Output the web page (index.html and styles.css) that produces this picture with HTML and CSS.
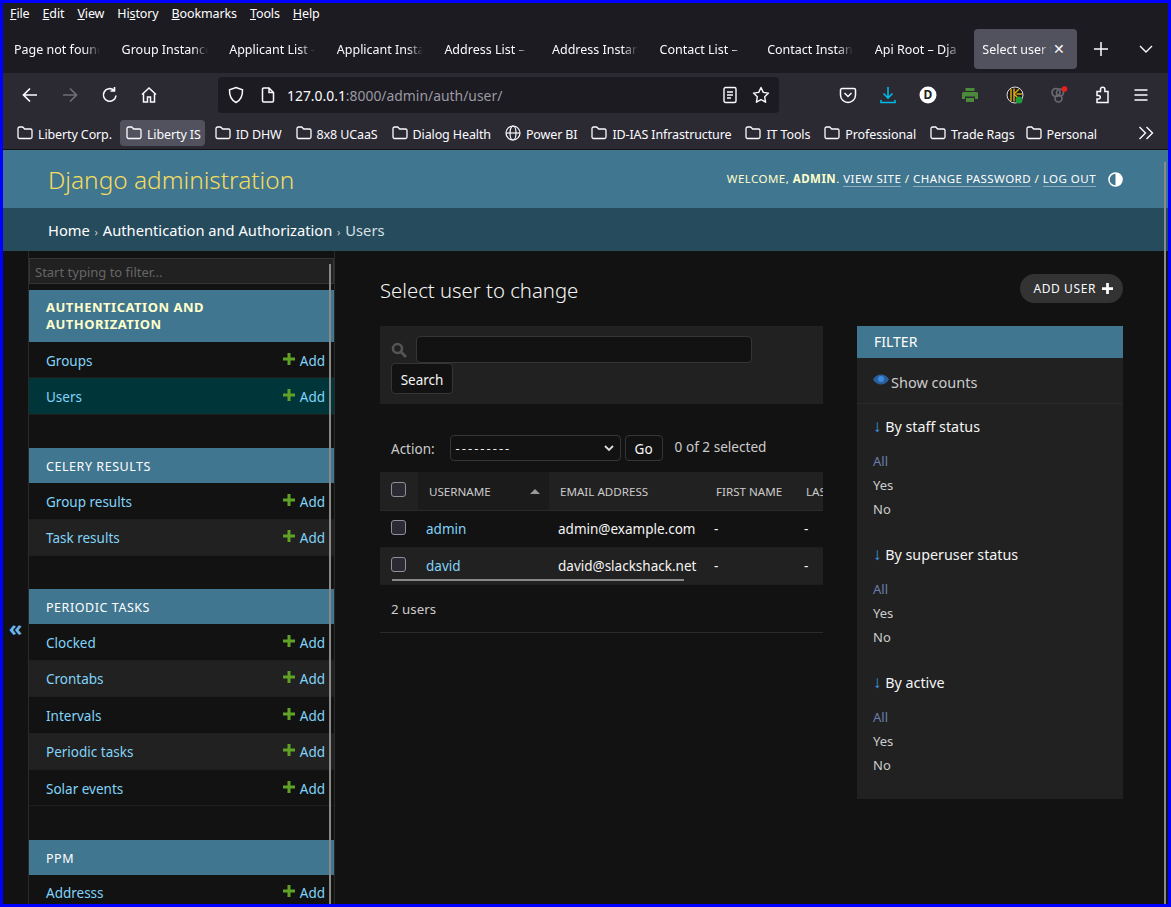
FILE: index.html
```html
<!DOCTYPE html>
<html>
    <head>
        <title>Select user to change | Django site admin</title>
        <link rel="stylesheet" href="styles.css">
    </head>
    <body>
        <svg class="defs" width="0" height="0">
            <symbol id="folder" viewBox="0 0 16 16"><path d="M1 3.500C1 2.700 1.700 2 2.500 2h3.200l2 2h5.800c.8 0 1.500.7 1.500 1.500v6.500c0 .8-.7 1.500-1.500 1.500h-11C1.700 13.500 1 12.800 1 12z" fill="none" stroke="currentColor" stroke-width="1.300"/></symbol>
            <symbol id="plus" viewBox="0 0 12 12"><path d="M4.500 0h3v4.500H12v3H7.500V12h-3V7.500H0v-3h4.500z" fill="currentColor"/></symbol>
        </svg>
        <div class="window">
            <div class="menubar">
                <span><u>F</u>ile</span>
                <span><u>E</u>dit</span>
                <span><u>V</u>iew</span>
                <span>Hi<u>s</u>tory</span>
                <span><u>B</u>ookmarks</span>
                <span><u>T</u>ools</span>
                <span><u>H</u>elp</span>
            </div>
            <div class="tabbar">
                <div class="tab"><span>Page not found</span></div>
                <div class="tab"><span>Group Instance</span></div>
                <div class="tab"><span>Applicant List –</span></div>
                <div class="tab"><span>Applicant Insta</span></div>
                <div class="tab"><span>Address List –</span></div>
                <div class="tab"><span>Address Instan</span></div>
                <div class="tab"><span>Contact List –</span></div>
                <div class="tab"><span>Contact Instan</span></div>
                <div class="tab"><span>Api Root – Dja</span></div>
                <div class="tab tab-active"><span>Select user t</span><b>✕</b></div>
                <svg class="new-tab" width="16" height="16" viewBox="0 0 16 16"><path d="M8 1v14M1 8h14" stroke="#fbfbfe" stroke-width="1.500"/></svg>
                <svg class="tab-list" width="16" height="16" viewBox="0 0 16 16"><path d="M2 5l6 6 6-6" fill="none" stroke="#fbfbfe" stroke-width="1.400"/></svg>
            </div>
            <div class="navbar">
                <svg class="nav-back" width="18" height="18" viewBox="0 0 18 18"><path d="M16 9H2.500M9 2.500L2.500 9 9 15.500" fill="none" stroke="#fbfbfe" stroke-width="1.700"/></svg>
                <svg class="nav-forward" width="18" height="18" viewBox="0 0 18 18"><path d="M2 9h13.500M9 2.500L15.500 9 9 15.500" fill="none" stroke="#6f6e75" stroke-width="1.700"/></svg>
                <svg class="nav-reload" width="18" height="18" viewBox="0 0 18 18"><path d="M15 9.500A6.300 6.300 0 1 1 13 4.300M13.500 1v4h-4" fill="none" stroke="#fbfbfe" stroke-width="1.600"/></svg>
                <svg class="nav-home" width="18" height="18" viewBox="0 0 18 18"><path d="M2 8.500L9 2l7 6.500M3.500 7.500V16h4v-5h3v5h4V7.500" fill="none" stroke="#fbfbfe" stroke-width="1.500"/></svg>
                <div class="urlbar">
                    <svg width="18" height="18" viewBox="0 0 18 18"><path d="M9 1.500l6.500 2.200c.2 5.500-1.500 10.300-6.500 12.800C4 14 2.300 9.200 2.500 3.700z" fill="none" stroke="#fbfbfe" stroke-width="1.500"/></svg>
                    <svg class="url-page" width="14" height="16" viewBox="0 0 14 16"><path d="M1.500 2.200c0-.6.500-1.200 1.200-1.200h5.300l4.500 4.500v8.300c0 .6-.5 1.200-1.200 1.200H2.700c-.7 0-1.200-.6-1.200-1.200zM8 1v4.500h4.500" fill="none" stroke="#fbfbfe" stroke-width="1.500"/></svg>
                    <span class="url-text">127.0.0.1<em>:8000/admin/auth/user/</em></span>
                    <svg class="url-reader" width="16" height="18" viewBox="0 0 16 18"><path d="M3.500 1.500h9c.8 0 1.500.7 1.500 1.500v12c0 .8-.7 1.500-1.500 1.500h-9C2.700 16.500 2 15.800 2 15V3c0-.8.7-1.500 1.500-1.500zM5 6h6M5 9h6M5 12h4" fill="none" stroke="#fbfbfe" stroke-width="1.400"/></svg>
                    <svg width="18" height="18" viewBox="0 0 18 18"><path d="M9 1.500l2.300 4.900 5.200.7-3.800 3.700.9 5.400L9 13.600l-4.600 2.600.9-5.400L1.500 7.100l5.200-.7z" fill="none" stroke="#fbfbfe" stroke-width="1.400" stroke-linejoin="round"/></svg>
                </div>
                <div class="nav-tools">
                    <svg width="18" height="18" viewBox="0 0 18 18"><path d="M3 2.500h12c.8 0 1.500.7 1.500 1.500v5a7.500 7.500 0 0 1-15 0V4c0-.8.7-1.500 1.500-1.500zM5.500 7L9 10.500 12.500 7" fill="none" stroke="#fbfbfe" stroke-width="1.500"/></svg>
                    <svg width="18" height="18" viewBox="0 0 18 18"><path d="M9 1v10.500M4.500 7.500L9 12l4.500-4.500M2 14v2.500h14V14" fill="none" stroke="#00b8e6" stroke-width="1.600"/></svg>
                    <svg width="18" height="18" viewBox="0 0 18 18"><circle cx="9" cy="9" r="8.500" fill="#fff"/><text x="9" y="13" text-anchor="middle" class="ext-d">D</text></svg>
                    <svg width="18" height="18" viewBox="0 0 18 18"><path d="M4.500 2h9v3h-9zM2.500 6h13C16.500 6 17 6.800 17 7.500V13h-3v-2.500H4V13H1V7.500C1 6.800 1.500 6 2.500 6zM5 12h8v4H5z" fill="#4a8a3a"/></svg>
                    <svg width="18" height="18" viewBox="0 0 18 18"><circle cx="9" cy="9" r="8" fill="#1a1a1a" stroke="#ddd" stroke-width="1"/><path d="M5 3v12M8 2.500v13M8 8l5-5M8 8l5 5M10.500 8H16" fill="none" stroke="#d9a514" stroke-width="1.500"/><circle cx="13" cy="14" r="3.500" fill="#1f9a3c"/></svg>
                    <svg width="18" height="18" viewBox="0 0 18 18"><g fill="none" stroke="#6a696f" stroke-width="1.700"><circle cx="6" cy="6.500" r="4"/><circle cx="10" cy="6.500" r="3.500"/><circle cx="8.500" cy="12.500" r="3.500"/></g><circle cx="14.500" cy="3" r="2.800" fill="#f01c1c"/></svg>
                    <svg width="18" height="18" viewBox="0 0 18 18"><path d="M4 5.500h3.500V3.500a2.200 2.200 0 0 1 4.400 0v2H15v11H4V13h1.500a1.800 1.800 0 0 0 0-3.600H4z" fill="none" stroke="#fbfbfe" stroke-width="1.500"/></svg>
                    <svg width="18" height="18" viewBox="0 0 18 18"><path d="M2.500 4h13M2.500 9h13M2.500 14h13" stroke="#fbfbfe" stroke-width="1.500"/></svg>
                </div>
            </div>
            <div class="bookmarks">
                <div class="bookmark"><svg width="16" height="16"><use href="#folder"/></svg>Liberty Corp.</div>
                <div class="bookmark bookmark-open"><svg width="16" height="16"><use href="#folder"/></svg>Liberty IS</div>
                <div class="bookmark"><svg width="16" height="16"><use href="#folder"/></svg>ID DHW</div>
                <div class="bookmark"><svg width="16" height="16"><use href="#folder"/></svg>8x8 UCaaS</div>
                <div class="bookmark"><svg width="16" height="16"><use href="#folder"/></svg>Dialog Health</div>
                <div class="bookmark"><svg width="16" height="16" viewBox="0 0 16 16"><g fill="none" stroke="currentColor" stroke-width="1.200"><circle cx="8" cy="8" r="7"/><ellipse cx="8" cy="8" rx="3" ry="7"/><path d="M1 8h14"/></g></svg>Power BI</div>
                <div class="bookmark"><svg width="16" height="16"><use href="#folder"/></svg>ID-IAS Infrastructure</div>
                <div class="bookmark"><svg width="16" height="16"><use href="#folder"/></svg>IT Tools</div>
                <div class="bookmark"><svg width="16" height="16"><use href="#folder"/></svg>Professional</div>
                <div class="bookmark"><svg width="16" height="16"><use href="#folder"/></svg>Trade Rags</div>
                <div class="bookmark bookmark-last"><svg width="16" height="16"><use href="#folder"/></svg>Personal</div>
                <svg class="bookmark-more" width="16" height="16" viewBox="0 0 16 16"><path d="M1.500 2l6 6-6 6M8.500 2l6 6-6 6" fill="none" stroke="#fbfbfe" stroke-width="1.400"/></svg>
            </div>

            <div class="page">
                <div class="site-header">
                    <div class="branding">Django administration</div>
                    <div class="user-tools">
                        <span>WELCOME, <strong>ADMIN</strong>. <a>VIEW SITE</a> / <a>CHANGE PASSWORD</a> / <a>LOG OUT</a></span>
                        <svg class="theme-toggle" width="15" height="15" viewBox="0 0 16 16"><circle cx="8" cy="8" r="7" fill="none" stroke="#fff" stroke-width="1.600"/><path d="M8 1a7 7 0 0 1 0 14z" fill="#fff"/></svg>
                    </div>
                </div>
                <div class="breadcrumbs">Home <small>›</small> Authentication and Authorization <small>›</small> <span class="crumb-last">Users</span></div>

                <div class="main">
                    <div class="sidebar-toggle">«</div>
                    <div class="sidebar">
                        <input class="nav-filter" placeholder="Start typing to filter...">
                        <div class="app app-current">
                            <div class="app-caption">AUTHENTICATION AND AUTHORIZATION</div>
                            <div class="model"><a>Groups</a><span class="add"><svg width="12" height="12"><use href="#plus"/></svg><a>Add</a></span></div>
                            <div class="model model-current"><a>Users</a><span class="add"><svg width="12" height="12"><use href="#plus"/></svg><a>Add</a></span></div>
                        </div>
                        <div class="app">
                            <div class="app-caption">CELERY RESULTS</div>
                            <div class="model"><a>Group results</a><span class="add"><svg width="12" height="12"><use href="#plus"/></svg><a>Add</a></span></div>
                            <div class="model model-alt"><a>Task results</a><span class="add"><svg width="12" height="12"><use href="#plus"/></svg><a>Add</a></span></div>
                        </div>
                        <div class="app">
                            <div class="app-caption">PERIODIC TASKS</div>
                            <div class="model"><a>Clocked</a><span class="add"><svg width="12" height="12"><use href="#plus"/></svg><a>Add</a></span></div>
                            <div class="model model-alt"><a>Crontabs</a><span class="add"><svg width="12" height="12"><use href="#plus"/></svg><a>Add</a></span></div>
                            <div class="model"><a>Intervals</a><span class="add"><svg width="12" height="12"><use href="#plus"/></svg><a>Add</a></span></div>
                            <div class="model model-alt"><a>Periodic tasks</a><span class="add"><svg width="12" height="12"><use href="#plus"/></svg><a>Add</a></span></div>
                            <div class="model"><a>Solar events</a><span class="add"><svg width="12" height="12"><use href="#plus"/></svg><a>Add</a></span></div>
                        </div>
                        <div class="app">
                            <div class="app-caption">PPM</div>
                            <div class="model"><a>Addresss</a><span class="add"><svg width="12" height="12"><use href="#plus"/></svg><a>Add</a></span></div>
                        </div>
                        <div class="sidebar-scroll"></div>
                    </div>

                    <div class="content">
                        <div class="content-head">
                            <h1>Select user to change</h1>
                            <a class="addlink">ADD USER <svg width="11" height="11"><use href="#plus"/></svg></a>
                        </div>
                        <div class="columns">
                            <div class="changelist">
                                <div class="toolbar">
                                    <div class="search-row">
                                        <svg width="16" height="16" viewBox="0 0 16 16"><circle cx="6.500" cy="6.500" r="4.500" fill="none" stroke="#555" stroke-width="2.600"/><path d="M10 10l5 5" stroke="#555" stroke-width="2.800"/></svg>
                                        <input class="search-input">
                                    </div>
                                    <button class="btn btn-search">Search</button>
                                </div>
                                <div class="actions">
                                    <label>Action:</label>
                                    <div class="select"><span>---------</span><svg width="10" height="7" viewBox="0 0 10 7"><path d="M1 1l4 4 4-4" fill="none" stroke="#ddd" stroke-width="1.800"/></svg></div>
                                    <button class="btn btn-go">Go</button>
                                    <span class="counter">0 of 2 selected</span>
                                </div>
                                <div class="results">
                                    <table>
                                        <thead>
                                            <tr>
                                                <th class="col-check"><span class="check"></span></th>
                                                <th class="col-user">USERNAME<i class="sort-up"></i></th>
                                                <th class="col-email">EMAIL ADDRESS</th>
                                                <th class="col-first">FIRST NAME</th>
                                                <th class="col-last">LAST NAME</th>
                                            </tr>
                                        </thead>
                                        <tbody>
                                            <tr>
                                                <td><span class="check"></span></td>
                                                <td class="user-cell"><a>admin</a></td>
                                                <td>admin@example.com</td>
                                                <td>-</td>
                                                <td>-</td>
                                            </tr>
                                            <tr class="row-alt">
                                                <td><span class="check"></span></td>
                                                <td class="user-cell"><a>david</a></td>
                                                <td>david@slackshack.net</td>
                                                <td>-</td>
                                                <td>-</td>
                                            </tr>
                                        </tbody>
                                    </table>
                                    <div class="table-scroll"></div>
                                </div>
                                <p class="paginator">2 users</p>
                            </div>
                            <div class="filter">
                                <div class="filter-head">FILTER</div>
                                <div class="show-counts">
                                    <svg width="16" height="11" viewBox="0 0 16 11"><path d="M0 5.500C2 2 5 .5 8 .5s6 1.500 8 5c-2 3.500-5 5-8 5s-6-1.500-8-5z" fill="#2a5f9e"/><circle cx="8" cy="5" r="3" fill="#3f8ad8"/></svg>
                                    Show counts
                                </div>
                                <div class="filter-group">
                                    <h3><span>↓</span> By staff status</h3>
                                    <ul><li class="selected">All</li><li>Yes</li><li>No</li></ul>
                                </div>
                                <div class="filter-group">
                                    <h3><span>↓</span> By superuser status</h3>
                                    <ul><li class="selected">All</li><li>Yes</li><li>No</li></ul>
                                </div>
                                <div class="filter-group">
                                    <h3><span>↓</span> By active</h3>
                                    <ul><li class="selected">All</li><li>Yes</li><li>No</li></ul>
                                </div>
                            </div>
                        </div>
                    </div>
                </div>
                <div class="page-scroll"></div>
            </div>
        </div>
    </body>
</html>
```

FILE: styles.css
```css
* {
	box-sizing: border-box;
}

html, body {
	margin: 0;
	height: 100%;
	overflow: hidden;
}

body {
	font-family: "Noto Sans", "Open Sans", sans-serif;
	color: #fbfbfe;
	background-color: #0000ff;
}

.defs {
	position: absolute;
}

a {
	color: inherit;
}

.window {
	display: flex;
	flex-direction: column;
	height: 907px;
	border: 3px solid #0000ff;
	background-color: #1c1b22;
}

/* browser chrome */
.menubar {
	display: flex;
	gap: 13px;
	height: 24px;
	padding: 2px 0 0 7px;
	font-size: 12.500px;
	letter-spacing: -0.12px;
	line-height: 18px;
	color: #fff;
}

.tabbar {
	display: flex;
	align-items: center;
	height: 46px;
	padding-bottom: 2px;
	font-size: 12.500px;
}

.tab {
	width: 107.600px;
	flex: none;
	padding-left: 11px;
}

.tab span {
	display: block;
	width: 86px;
	overflow: hidden;
	white-space: nowrap;
	-webkit-mask-image: linear-gradient(to right, #000 82%, transparent);
	mask-image: linear-gradient(to right, #000 82%, transparent);
}

.tab-active {
	display: flex;
	align-items: center;
	width: 103px;
	height: 40px;
	margin: 0 0 0 3px;
	padding-left: 8px;
	background-color: #52525e;
	border-radius: 4px;
}

.tab-active span {
	width: 70px;
}

.tab-active b {
	margin: -2px 0 0 1px;
	font-size: 14px;
	font-weight: 400;
}

.new-tab {
	margin-left: 16px;
}

.tab-list {
	margin-left: 29px;
}

.navbar {
	display: flex;
	align-items: center;
	height: 44px;
	background-color: #2b2a33;
}

.nav-back {
	margin-left: 18px;
}

.nav-forward {
	margin-left: 22px;
}

.nav-reload {
	margin-left: 22px;
}

.nav-home {
	margin-left: 21px;
}

.urlbar {
	display: flex;
	align-items: center;
	width: 561px;
	height: 36px;
	margin-left: 60px;
	padding: 0 9px 0 9px;
	background-color: #1c1b22;
	border-radius: 4px;
	font-size: 13.900px;
}

.url-page {
	margin-left: 16px;
}

.url-text {
	margin-left: 12px;
	flex: 1;
}

.url-text em {
	font-style: normal;
	color: #9b9aa1;
}

.url-reader {
	margin-right: 14px;
}

.nav-tools {
	display: flex;
	gap: 22px;
	margin-left: 60px;
}

.ext-d {
	fill: #222;
	font-size: 12px;
	font-weight: 700;
}

.nav-tools svg:nth-child(4) {
	margin-left: 2px;
}

.nav-tools svg:nth-child(5) {
	margin-left: 5px;
}

.nav-tools svg:nth-child(6) {
	margin-left: 4px;
}

.nav-tools svg:nth-child(7) {
	margin-left: 3px;
}

.nav-tools svg:nth-child(8) {
	margin-left: -1px;
}

.bookmarks {
	display: flex;
	align-items: center;
	gap: 4px;
	height: 33px;
	padding-left: 8px;
	background-color: #2b2a33;
	font-size: 12.500px;
	letter-spacing: -0.12px;
	border-bottom: 1px solid #111;
}

.bookmark {
	display: flex;
	align-items: center;
	gap: 5px;
	height: 26px;
	padding: 2px 4px 0 6px;
	border-radius: 4px;
	white-space: nowrap;
}

.bookmark svg {
	margin-top: -2px;
}

.bookmark-open {
	background-color: #52525e;
}

.bookmark-last {
	margin-left: -3px;
}

.bookmark-more {
	margin-left: auto;
	margin-right: 14px;
}

/* django admin */
.page {
	position: relative;
	flex: 1;
	min-height: 0;
	overflow: hidden;
	background-color: #121212;
}

.site-header {
	display: flex;
	justify-content: space-between;
	align-items: center;
	height: 58px;
	padding: 0 45px;
	background-color: #417690;
	color: #f5dd5d;
}

.branding {
	font-size: 24.400px;
	font-weight: 300;
}

.user-tools {
	display: flex;
	align-items: center;
	font-size: 11.500px;
	letter-spacing: 0.47px;
	color: #ffc;
}

.user-tools span {
	margin-top: -2px;
}

.user-tools a {
	color: #fff;
	border-bottom: 1px solid rgba(255, 255, 255, 0.4);
}

.theme-toggle {
	margin-left: 12px;
}

.breadcrumbs {
	height: 43px;
	padding: 0 45px;
	background-color: #264b5d;
	color: #fff;
	font-size: 14.700px;
	line-height: 44px;
}

.breadcrumbs small {
	margin: 0 1px;
	font-size: 11px;
	color: #ccc;
}

.crumb-last {
	color: #d5e0e6;
}

.main {
	display: flex;
	height: 660px;
}

.sidebar-toggle {
	width: 25px;
	flex: none;
	padding-top: 363px;
	text-align: center;
	color: #6ab7ee;
	font-size: 22px;
	font-weight: 700;
	line-height: 26px;
}

.sidebar {
	position: relative;
	width: 307px;
	flex: none;
	padding-top: 7px;
	border-left: 1px solid #2a2a2a;
	border-right: 1px solid #2a2a2a;
}

.nav-filter {
	display: block;
	width: 100%;
	height: 26px;
	margin: 0 0 6px;
	padding: 1px 5px 0;
	background-color: #212121;
	border: 1px solid #353535;
	font-family: inherit;
	font-size: 13px;
}

.nav-filter::placeholder {
	color: #666;
}

.app {
	margin-bottom: 33.400px;
}

.app-caption {
	min-height: 35px;
	padding: 10px 80px 8px 17px;
	background-color: #417690;
	color: #fff;
	font-size: 12.500px;
	line-height: 17px;
	letter-spacing: 0.55px;
}

.app-current .app-caption {
	padding-top: 9px;
	font-size: 13px;
	font-weight: 700;
	letter-spacing: 0.5px;
	color: #ffc;
	min-height: 52px;
}

.model {
	display: flex;
	justify-content: space-between;
	align-items: center;
	height: 36.400px;
	padding: 2px 9px 0 17px;
	border-bottom: 1px solid #1e1e1e;
	color: #81d4fa;
	font-size: 13.500px;
}

.model-current {
	background-color: #00363a;
}

.model-alt {
	background-color: #212121;
}

.add {
	display: flex;
	align-items: center;
	gap: 5px;
}

.add svg {
	color: #5fa225;
	margin-top: -4px;
}

.sidebar-scroll {
	position: absolute;
	top: 13px;
	right: 3px;
	bottom: 0;
	width: 2px;
	background-color: #888;
}

.content {
	flex: 1;
	padding: 23px 45px 0 45px;
}

.content-head {
	display: flex;
	justify-content: space-between;
	align-items: center;
	height: 29px;
}

h1 {
	margin: 0;
	padding-top: 3px;
	font-size: 20.300px;
	font-weight: 300;
	color: #f5f5f5;
}

.addlink {
	display: flex;
	align-items: center;
	gap: 6px;
	height: 29px;
	padding: 0 10px 0 13px;
	background-color: #333;
	border-radius: 15px;
	font-size: 12px;
	letter-spacing: 0.6px;
}

.columns {
	display: flex;
	align-items: flex-start;
	gap: 34px;
	margin-top: 23px;
}

.changelist {
	width: 443px;
	flex: none;
}

.toolbar {
	height: 78px;
	padding: 10px 11px 0;
	background-color: #212121;
}

.search-row {
	display: flex;
	align-items: center;
	gap: 9px;
}

.search-input {
	width: 336px;
	height: 27px;
	background-color: #121212;
	border: 1px solid #353535;
	border-radius: 4px;
}

.btn {
	display: block;
	background-color: #121212;
	border: 1px solid #353535;
	border-radius: 4px;
	color: #f5f5f5;
	font-family: inherit;
	font-size: 13.500px;
	padding: 2px 0 0;
}

.btn-search {
	width: 62px;
	height: 31px;
}

.actions {
	display: flex;
	align-items: center;
	height: 26px;
	margin: 31px 0 11px;
	padding-left: 11px;
	font-size: 13.500px;
	color: #ccc;
}

.actions label {
	padding-top: 2px;
}

.select {
	display: flex;
	justify-content: space-between;
	align-items: center;
	width: 171px;
	height: 26px;
	margin-left: 15px;
	padding: 0 6px 0 5px;
	background-color: #121212;
	border: 1px solid #353535;
	border-radius: 4px;
	color: #eee;
	font-size: 13px;
}

.select span {
	letter-spacing: 2px;
}

.btn-go {
	width: 38px;
	height: 26px;
	margin-left: 4px;
}

.counter {
	margin: -4px 0 0 12px;
	font-size: 13.600px;
	color: #ccc;
}

.results {
	position: relative;
	width: 443px;
	overflow: hidden;
}

table {
	width: 520px;
	table-layout: fixed;
	border-collapse: collapse;
	font-size: 13.500px;
}

th {
	height: 38px;
	padding: 2px 11px 0;
	background-color: #212121;
	border-bottom: 1px solid #2a2a2a;
	color: #ccc;
	font-size: 11.600px;
	font-weight: 400;
	text-align: left;
	white-space: nowrap;
}

.col-check {
	width: 38px;
}

.col-user {
	position: relative;
	width: 131px;
	background-color: #1b1b1b;
}

.col-email {
	width: 156px;
}

.col-first {
	width: 90px;
}

td {
	height: 37px;
	padding: 0 9px;
	border-bottom: 1px solid #1e1e1e;
	color: #f5f5f5;
	white-space: nowrap;
}

td:first-child, th:first-child {
	padding-left: 11px;
}

td:first-child .check {
	margin-top: -3px;
}

th:first-child .check {
	margin-top: -4px;
}

.user-cell {
	padding-left: 8px;
}

.user-cell a {
	color: #81d4fa;
}

.row-alt td {
	background-color: #212121;
}

.check {
	display: block;
	width: 15px;
	height: 15px;
	background-color: #2b2a33;
	border: 1px solid #8f8f9d;
	border-radius: 3px;
}

.sort-up {
	position: absolute;
	top: 17px;
	right: 9px;
	border: 5px solid transparent;
	border-top: 0;
	border-bottom: 5px solid #999;
}

.table-scroll {
	position: absolute;
	left: 12px;
	bottom: 4px;
	width: 292px;
	height: 2px;
	background-color: #888;
}

.paginator {
	height: 48px;
	margin: 0;
	padding-left: 11px;
	border-bottom: 1px solid #2a2a2a;
	font-size: 13.300px;
	line-height: 48px;
	color: #ccc;
}

.filter {
	width: 266px;
	flex: none;
	height: 473px;
	background-color: #212121;
}

.filter-head {
	height: 32px;
	padding-left: 17px;
	background-color: #417690;
	font-size: 14px;
	line-height: 32px;
	color: #fff;
}

.show-counts {
	display: flex;
	align-items: center;
	gap: 2px;
	height: 46px;
	padding: 3px 0 0 16px;
	border-bottom: 1px solid #2a2a2a;
	font-size: 14.500px;
	color: #ccc;
}

.show-counts svg {
	margin-top: -6px;
}

.filter-group {
	padding: 13px 17px 0 16px;
	height: 128px;
}

.filter-group h3 {
	margin: 0 0 11.600px;
	font-size: 14.300px;
	font-weight: 400;
	line-height: 20px;
	color: #f5f5f5;
}

.filter-group h3 span {
	color: #3f9bea;
	font-size: 17px;
	font-weight: 700;
	line-height: 1;
}

ul {
	margin: 0;
	padding: 0;
	list-style: none;
	font-size: 13px;
	line-height: 24.400px;
	color: #ccc;
}

.selected {
	color: #6a7fae;
}

.page-scroll {
	position: absolute;
	top: 12px;
	right: 2px;
	bottom: 0;
	width: 2px;
	background-color: #8a8a8a;
}
```
